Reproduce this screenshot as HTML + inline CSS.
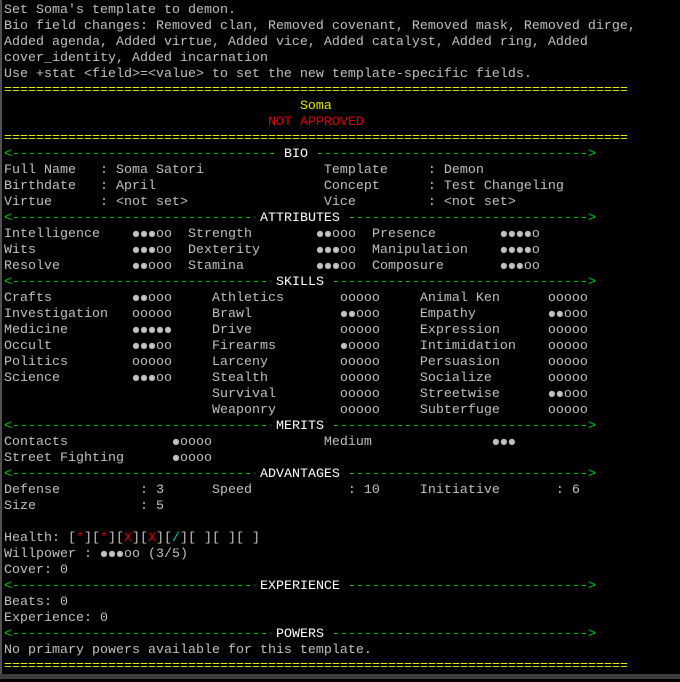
<!DOCTYPE html>
<html><head><meta charset="utf-8">
<style>
html,body{margin:0;padding:0;background:#000;}
body{width:680px;height:682px;overflow:hidden;position:relative;}
#t{position:absolute;left:4px;top:3px;font-family:"Liberation Mono",monospace;font-size:13.33px;color:#c0c0c0;}
#t div{height:16px;line-height:16px;white-space:pre;}
.y{color:#e8e800}.r{color:#e00000}.g{color:#00d800}.w{color:#fff}.c{color:#00c0c0}
.f{display:inline-block;width:8px;text-align:center;font-family:"DejaVu Sans",sans-serif;font-size:8px;vertical-align:top;position:relative;top:-1px;}
#lb{position:absolute;left:0;top:0;width:2px;height:674px;background:#505050;}
#bb{position:absolute;left:0;top:674px;width:680px;height:5px;background:#3c3c3c;}
</style></head><body>
<div id="lb"></div>
<div id="t">
<div>Set Soma's template to demon.</div>
<div>Bio field changes: Removed clan, Removed covenant, Removed mask, Removed dirge,</div>
<div>Added agenda, Added virtue, Added vice, Added catalyst, Added ring, Added</div>
<div>cover_identity, Added incarnation</div>
<div>Use +stat &lt;field&gt;=&lt;value&gt; to set the new template-specific fields.</div>
<div class="y">==============================================================================</div>
<div>                                     <span class="y">Soma</span></div>
<div>                                 <span class="r">NOT APPROVED</span></div>
<div class="y">==============================================================================</div>
<div><span class="g">&lt;---------------------------------</span><span class="w"> BIO </span><span class="g">----------------------------------&gt;</span></div>
<div>Full Name   : Soma Satori               Template     : Demon</div>
<div>Birthdate   : April                     Concept      : Test Changeling</div>
<div>Virtue      : &lt;not set&gt;                 Vice         : &lt;not set&gt;</div>
<div><span class="g">&lt;------------------------------</span><span class="w"> ATTRIBUTES </span><span class="g">------------------------------&gt;</span></div>
<div>Intelligence    ●●●oo  Strength        ●●ooo  Presence        ●●●●o</div>
<div>Wits            ●●●oo  Dexterity       ●●●oo  Manipulation    ●●●●o</div>
<div>Resolve         ●●ooo  Stamina         ●●●oo  Composure       ●●●oo</div>
<div><span class="g">&lt;--------------------------------</span><span class="w"> SKILLS </span><span class="g">--------------------------------&gt;</span></div>
<div>Crafts          ●●ooo     Athletics       ooooo     Animal Ken      ooooo</div>
<div>Investigation   ooooo     Brawl           ●●ooo     Empathy         ●●ooo</div>
<div>Medicine        ●●●●●     Drive           ooooo     Expression      ooooo</div>
<div>Occult          ●●●oo     Firearms        ●oooo     Intimidation    ooooo</div>
<div>Politics        ooooo     Larceny         ooooo     Persuasion      ooooo</div>
<div>Science         ●●●oo     Stealth         ooooo     Socialize       ooooo</div>
<div>                          Survival        ooooo     Streetwise      ●●ooo</div>
<div>                          Weaponry        ooooo     Subterfuge      ooooo</div>
<div><span class="g">&lt;--------------------------------</span><span class="w"> MERITS </span><span class="g">--------------------------------&gt;</span></div>
<div>Contacts             ●oooo              Medium               ●●●</div>
<div>Street Fighting      ●oooo</div>
<div><span class="g">&lt;------------------------------</span><span class="w"> ADVANTAGES </span><span class="g">------------------------------&gt;</span></div>
<div>Defense          : 3      Speed            : 10     Initiative       : 6</div>
<div>Size             : 5</div>
<div> </div>
<div>Health: [<span class="r">*</span>][<span class="r">*</span>][<span class="r">X</span>][<span class="r">X</span>][<span class="c">/</span>][ ][ ][ ]</div>
<div>Willpower : ●●●oo (3/5)</div>
<div>Cover: 0</div>
<div><span class="g">&lt;------------------------------</span><span class="w"> EXPERIENCE </span><span class="g">------------------------------&gt;</span></div>
<div>Beats: 0</div>
<div>Experience: 0</div>
<div><span class="g">&lt;--------------------------------</span><span class="w"> POWERS </span><span class="g">--------------------------------&gt;</span></div>
<div>No primary powers available for this template.</div>
<div class="y">==============================================================================</div>
</div>
<div id="bb"></div>
<script>
document.querySelectorAll('#t div').forEach(function(d){
  if(d.innerHTML.indexOf('●')>=0){d.innerHTML=d.innerHTML.replace(/●/g,'<span class="f">●</span>');}
});
</script>
</body></html>
